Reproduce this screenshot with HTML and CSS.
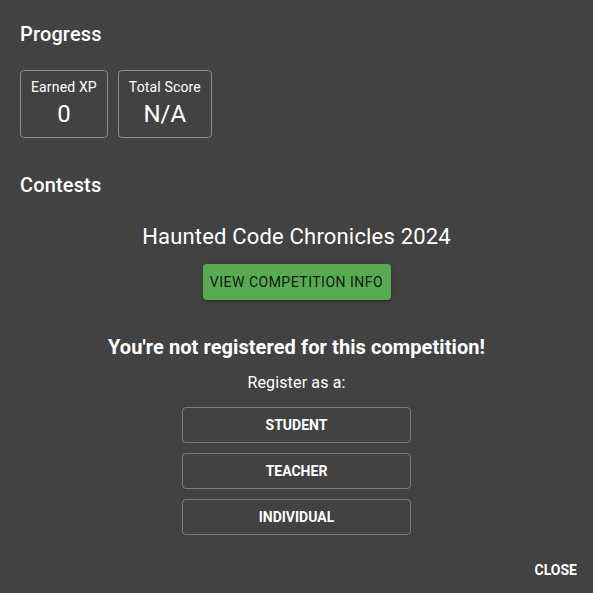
FILE: index.html
```html
<!DOCTYPE html>
<html>
<head>
<meta charset="utf-8">
<link rel="stylesheet" href="styles.css">
</head>
<body>
<div class="dialog">
  <div class="content">
    <h2 class="heading">Progress</h2>
    <div class="stats">
      <div class="stat">
        <div class="stat-label">Earned XP</div>
        <div class="stat-value">0</div>
      </div>
      <div class="stat">
        <div class="stat-label">Total Score</div>
        <div class="stat-value">N/A</div>
      </div>
    </div>
    <h2 class="heading contests">Contests</h2>
    <div class="contest">
      <div class="contest-title">Haunted Code Chronicles 2024</div>
      <button class="btn-green">View Competition Info</button>
      <div class="not-registered">You're not registered for this competition!</div>
      <div class="register-as">Register as a:</div>
      <div class="roles">
        <button class="btn-outline">Student</button>
        <button class="btn-outline">Teacher</button>
        <button class="btn-outline">Individual</button>
      </div>
    </div>
  </div>
  <div class="actions">
    <button class="btn-text">Close</button>
  </div>
</div>
</body>
</html>
```
FILE: styles.css
```css
* { box-sizing: border-box; }
html, body {
  margin: 0;
  padding: 0;
  background: #424242;
  height: 100%;
}
body {
  font-family: Roboto, "Liberation Sans", sans-serif;
  color: #fff;
}
.dialog {
  width: 593px;
  height: 593px;
  display: flex;
  flex-direction: column;
}
.content {
  padding: 18px 20px 0;
  flex: 1;
}
.heading {
  margin: 0;
  font-size: 20px;
  font-weight: 500;
  line-height: 32px;
  letter-spacing: 0.15px;
}
.stats {
  display: flex;
  gap: 10px;
  margin-top: 20px;
}
.stat {
  border: 1px solid rgba(255,255,255,0.4);
  border-radius: 4px;
  height: 68px;
  padding: 6px 10px 0;
  text-align: center;
}
.stat-label {
  font-size: 14px;
  line-height: 20px;
  letter-spacing: 0.15px;
}
.stat-value {
  font-size: 24px;
  line-height: 34px;
}
.contests {
  margin-top: 31px;
}
.contest {
  display: flex;
  flex-direction: column;
  align-items: center;
  margin-top: 20px;
}
.contest-title {
  font-size: 22px;
  line-height: 32px;
  letter-spacing: 0.18px;
}
.btn-green {
  margin-top: 11px;
  width: 188px;
  height: 36px;
  padding: 0;
  border: none;
  border-radius: 4px;
  background: #58ab52;
  color: rgba(0,0,0,0.87);
  font-family: inherit;
  font-size: 14px;
  font-weight: 400;
  letter-spacing: 0.5px;
  text-transform: uppercase;
  box-shadow: 0 3px 1px -2px rgba(0,0,0,0.2), 0 2px 2px 0 rgba(0,0,0,0.14), 0 1px 5px 0 rgba(0,0,0,0.12);
}
.not-registered {
  margin-top: 31px;
  font-size: 20px;
  font-weight: 700;
  line-height: 32px;
  letter-spacing: 0.08px;
}
.register-as {
  margin-top: 8px;
  font-size: 16px;
  line-height: 24px;
  letter-spacing: 0.15px;
}
.roles {
  margin-top: 12px;
  display: flex;
  flex-direction: column;
  gap: 10px;
}
.btn-outline {
  width: 229px;
  height: 36px;
  background: transparent;
  border: 1px solid rgba(255,255,255,0.3);
  border-radius: 4px;
  color: #fff;
  font-family: inherit;
  font-size: 14px;
  font-weight: 700;
  text-transform: uppercase;
}
.actions {
  display: flex;
  justify-content: flex-end;
  padding: 0 8px 5px;
}
.btn-text {
  height: 36px;
  padding: 0 8px;
  background: transparent;
  border: none;
  color: #fff;
  font-family: inherit;
  font-size: 14px;
  font-weight: 700;
  text-transform: uppercase;
}
```
